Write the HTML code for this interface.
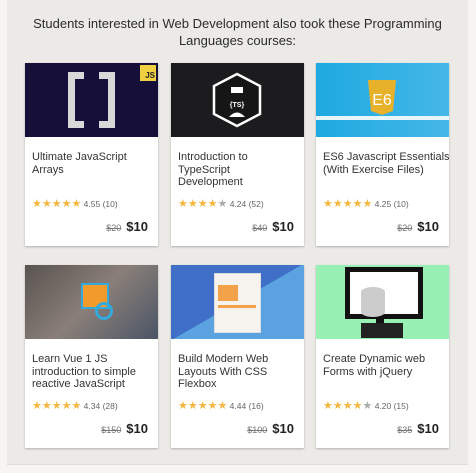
<!DOCTYPE html>
<html><head><meta charset="utf-8"><style>
*{margin:0;padding:0;box-sizing:border-box}
body{width:476px;height:473px;background:#f6f5f2;font-family:"Liberation Sans",sans-serif;overflow:hidden;position:relative}
.panel{position:absolute;left:7px;top:0;width:461px;height:465px;background:#ebeae6;border-bottom:1px solid #dddcd8}
h1{position:absolute;left:7px;width:461px;top:15px;text-align:center;font-weight:normal;font-size:13px;line-height:17px;color:#2b2b2b}
.card{position:absolute;width:133px;height:183px;background:#fff;box-shadow:0 1px 2px rgba(0,0,0,.25);overflow:hidden}
.img{height:74px;position:relative;overflow:hidden}
.t{position:absolute;left:7px;top:88px;right:2px;font-size:11px;line-height:12.6px;color:#333;white-space:nowrap}
.r{position:absolute;left:7px;top:134px;font-size:8.5px;color:#666;white-space:nowrap}
.r .s{color:#f4b73f;font-size:11px;letter-spacing:0}
.r .g{color:#aaa}
.p{position:absolute;right:10px;top:156px;font-size:13px;font-weight:bold;color:#222}
.p s{font-weight:normal;font-size:9px;color:#777;margin-right:5px}
</style></head><body>
<div class="panel"></div>
<h1>Students interested in Web Development also took these Programming<br>Languages courses:</h1>

<div class="card" style="left:25px;top:63px">
 <div class="img" style="background:#160f3a">
  <div style="position:absolute;left:43px;top:9px;width:16px;height:56px;border:7px solid #d8d8d8;border-right:none"></div>
  <div style="position:absolute;left:74px;top:9px;width:16px;height:56px;border:7px solid #d8d8d8;border-left:none"></div>
  <div style="position:absolute;right:2px;top:2px;width:16px;height:16px;background:#f0d040;font-size:8px;font-weight:bold;color:#222;text-align:right;padding:6px 1px 0 0;line-height:9px">JS</div>
 </div>
 <div class="t">Ultimate JavaScript<br>Arrays</div>
 <div class="r"><span class="s">★★★★★</span> 4.55 (10)</div>
 <div class="p"><s>$20</s>$10</div>
</div>

<div class="card" style="left:171px;top:63px">
 <div class="img" style="background:#1c1c1e">
  <svg width="133" height="74" style="position:absolute;left:0;top:0"><polygon points="66,11 89,23 89,51 66,63 43,51 43,23" fill="#161616" stroke="#fff" stroke-width="2.5"/><rect x="60" y="24" width="12" height="6" fill="#fff"/><text x="66" y="44" font-size="7" font-weight="bold" fill="#fff" text-anchor="middle" font-family="Liberation Sans">{TS}</text><path d="M58 54 Q66 45 74 54Z" fill="#fff"/></svg>
 </div>
 <div class="t">Introduction to<br>TypeScript<br>Development</div>
 <div class="r"><span class="s">★★★★<span class="g">★</span></span> 4.24 (52)</div>
 <div class="p"><s>$40</s>$10</div>
</div>

<div class="card" style="left:316px;top:63px">
 <div class="img" style="background:linear-gradient(90deg,#1ea9e0,#45b8e8)">
  <div style="position:absolute;left:0;top:53px;width:133px;height:4px;background:#e8f6fc"></div>
  <svg width="133" height="74" style="position:absolute;left:0;top:0"><path d="M52 17 H80 L77 48 L66 52 L55 48Z" fill="#e7b22a"/><text x="66" y="42" font-size="16" fill="#fff" text-anchor="middle" font-family="Liberation Sans">E6</text></svg>
 </div>
 <div class="t">ES6 Javascript Essentials<br>(With Exercise Files)</div>
 <div class="r"><span class="s">★★★★★</span> 4.25 (10)</div>
 <div class="p"><s>$20</s>$10</div>
</div>

<div class="card" style="left:25px;top:265px">
 <div class="img" style="background:linear-gradient(135deg,#5a5350,#8a7f78 50%,#4a5566)">
  <div style="position:absolute;left:56px;top:18px;width:28px;height:26px;background:#f29a2a;border:2px solid #3ad"></div>
  <div style="position:absolute;left:70px;top:37px;width:18px;height:18px;border:3px solid #3ad;border-radius:50%"></div>
 </div>
 <div class="t">Learn Vue 1 JS<br>introduction to simple<br>reactive JavaScript</div>
 <div class="r"><span class="s">★★★★★</span> 4.34 (28)</div>
 <div class="p"><s>$150</s>$10</div>
</div>

<div class="card" style="left:171px;top:265px">
 <div class="img" style="background:linear-gradient(150deg,#3f6fc6 50%,#5aa3e0 50%)">
  <div style="position:absolute;left:43px;top:8px;width:47px;height:60px;background:#f6f3ef;border:1px solid #ddd"></div>
  <div style="position:absolute;left:47px;top:20px;width:20px;height:16px;background:#f3a24a"></div>
  <div style="position:absolute;left:47px;top:40px;width:38px;height:3px;background:#f3a24a"></div>
 </div>
 <div class="t">Build Modern Web<br>Layouts With CSS<br>Flexbox</div>
 <div class="r"><span class="s">★★★★★</span> 4.44 (16)</div>
 <div class="p"><s>$100</s>$10</div>
</div>

<div class="card" style="left:316px;top:265px">
 <div class="img" style="background:#98f0b4">
  <div style="position:absolute;left:29px;top:2px;width:78px;height:52px;border:5px solid #111;background:#fff"></div>
  <div style="position:absolute;left:60px;top:54px;width:8px;height:7px;background:#111"></div>
  <div style="position:absolute;left:45px;top:58px;width:42px;height:15px;background:#222"></div>
  <div style="position:absolute;left:45px;top:22px;width:24px;height:30px;background:#ccc;border-radius:12px/5px"></div>
 </div>
 <div class="t">Create Dynamic web<br>Forms with jQuery</div>
 <div class="r"><span class="s">★★★★<span class="g">★</span></span> 4.20 (15)</div>
 <div class="p"><s>$35</s>$10</div>
</div>
</body></html>
